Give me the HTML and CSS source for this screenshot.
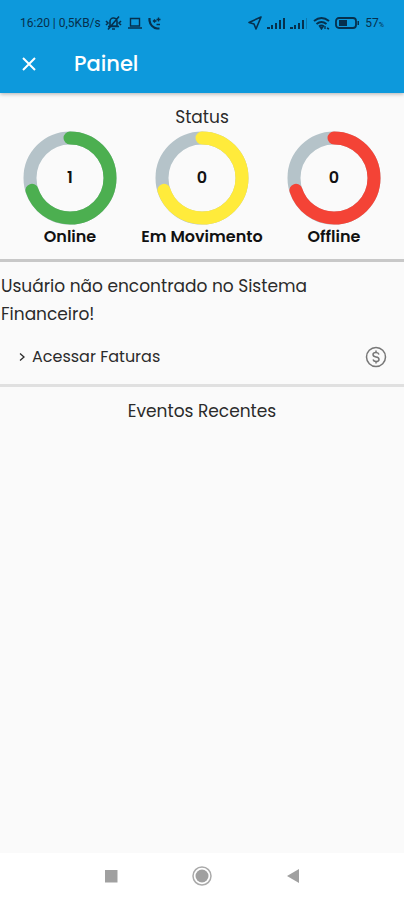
FILE: index.html
```html
<!DOCTYPE html>

<html lang="pt-BR">
    <head>
        <title>Painel</title>
        <meta charset="utf-8">
        <meta name="viewport" content="width=device-width, initial-scale=1">
        <link rel="stylesheet" href="styles.css">
    </head>

    <body>
        <header class="top">
            <div class="statusbar">
                <div class="sb-group">
                    <span>16:20 | 0,5KB/s</span>
                    <!-- muted bell -->
                    <svg width="17" height="16" viewBox="0 0 17 16" fill="none" stroke="currentColor" stroke-width="1.6">
                        <path d="M5 11V7a3.500 3.500 0 0 1 7-1v5zM3 11.500h11M7 14h3M3 14.500L14 1.500M1 6l2 2-2 2M16 6l-2 2 2 2"/>
                    </svg>
                    <!-- laptop -->
                    <svg width="14" height="14" viewBox="0 0 14 14" fill="none" stroke="currentColor" stroke-width="1.4">
                        <path d="M2.500 2.500h9v7.500h-9zM0 12h14"/>
                    </svg>
                    <!-- call -->
                    <svg width="13" height="13" viewBox="0 0 13 13" fill="none" stroke="currentColor">
                        <path stroke-width="2.200" d="M1.500 1v2.500C2 7.500 5 11 9 11.500h2.500"/>
                        <path stroke-width="1.400" d="M5.500 4h3M7 2.500L5.500 4 7 5.500M8.500 2.500h4M10.500 .5v4M8.500 7.500h3.500"/>
                    </svg>
                </div>
                <div class="sb-group sb-right">
                    <svg width="14" height="14" viewBox="0 0 14 14" fill="none" stroke="currentColor" stroke-width="1.600" stroke-linejoin="round">
                        <path d="M13 1L1 6.500l5 1.500 2 5z"/>
                    </svg>
                    <svg width="18" height="14" viewBox="0 0 18 14" fill="currentColor">
                        <path d="M0 11h3v2H0zM4 9h2v4H4zM8 7h2v6H8zM12 4h2v9h-2zM16 2h2v11h-2z"/>
                    </svg>
                    <svg width="18" height="14" viewBox="0 0 18 14" fill="currentColor">
                        <path d="M0 11h3v2H0zM4 9h2v4H4zM8 7h2v6H8zM12 4h2v9h-2z"/>
                        <path opacity=".3" d="M16 2h1v11h-1z"/>
                    </svg>
                    <svg width="17" height="14" viewBox="0 0 17 14" fill="none" stroke="currentColor" stroke-width="2">
                        <path d="M1 5q7.500-6 15 0M3.500 8q5-4 10 0M6 10.500q2.500-2 5 0"/>
                        <path stroke-width="1.400" d="M8.500 13l-1-1.500h2zM12 10v3M14 12l2 1"/>
                    </svg>
                    <svg width="25" height="14" viewBox="0 0 25 14" fill="none" stroke="currentColor">
                        <rect x="1" y="2" width="20" height="10" rx="3" stroke-width="1.800"/>
                        <path fill="currentColor" stroke="none" d="M4 4h8v6H4zM22.500 5H24v4h-1.500z"/>
                    </svg>
                    <span>57<small>%</small></span>
                </div>
            </div>
            <div class="appbar">
                <button class="close" type="button" aria-label="Fechar">
                    <svg width="14" height="14" viewBox="0 0 14 14" fill="none" stroke="currentColor" stroke-width="2">
                        <path d="M1 1l12 12M13 1L1 13"/>
                    </svg>
                </button>
                <h1>Painel</h1>
            </div>
        </header>

        <main>
            <section class="status">
                <h2>Status</h2>
                <div class="rings">
                    <div class="ring online">
                        <div class="dial">
                            <svg viewBox="0 0 94 94">
                                <circle class="track" cx="47" cy="47" r="40"/>
                                <circle class="value" cx="47" cy="47" r="40" pathLength="100"/>
                            </svg>
                            <b>1</b>
                        </div>
                        <span>Online</span>
                    </div>
                    <div class="ring moving">
                        <div class="dial">
                            <svg viewBox="0 0 94 94">
                                <circle class="track" cx="47" cy="47" r="40"/>
                                <circle class="value" cx="47" cy="47" r="40" pathLength="100"/>
                            </svg>
                            <b>0</b>
                        </div>
                        <span>Em Movimento</span>
                    </div>
                    <div class="ring offline">
                        <div class="dial">
                            <svg viewBox="0 0 94 94">
                                <circle class="track" cx="47" cy="47" r="40"/>
                                <circle class="value" cx="47" cy="47" r="40" pathLength="100"/>
                            </svg>
                            <b>0</b>
                        </div>
                        <span>Offline</span>
                    </div>
                </div>
            </section>

            <section class="finance">
                <p>Usuário não encontrado no Sistema Financeiro!</p>
                <a class="bills" href="#">
                    <svg width="8" height="10" viewBox="0 0 8 10" fill="none" stroke="currentColor" stroke-width="1.300">
                        <path d="M2 1.500l4 3.500-4 3.500"/>
                    </svg>
                    <span>Acessar Faturas</span>
                    <svg class="coin" width="22" height="22" viewBox="0 0 22 22" fill="none" stroke="currentColor" stroke-width="1.500">
                        <circle cx="11" cy="11" r="9.500"/>
                        <path d="M14 8.500C13.500 7 12.500 6.500 11 6.500c-4 0-4 4 0 4.500s4 4.500 0 4.500c-1.500 0-2.500-.5-3-2M11 4.500v2M11 15.500v2"/>
                    </svg>
                </a>
            </section>

            <section class="events">
                <h2>Eventos Recentes</h2>
            </section>
        </main>

        <nav class="navbar">
            <button type="button" aria-label="Recentes">
                <svg width="20" height="20" viewBox="0 0 20 20"><path fill="#a0a0a0" d="M4 4h12.500v12.500H4z"/></svg>
            </button>
            <button type="button" aria-label="Início">
                <svg width="20" height="20" viewBox="0 0 20 20">
                    <circle cx="10" cy="10" r="9" fill="none" stroke="#aaa" stroke-width="1.500"/>
                    <circle cx="10" cy="10" r="6.500" fill="#a0a0a0"/>
                </svg>
            </button>
            <button type="button" aria-label="Voltar">
                <svg width="20" height="20" viewBox="0 0 20 20"><path fill="#a0a0a0" d="M16 3v14L4 10z"/></svg>
            </button>
        </nav>
    </body>
</html>
```
FILE: styles.css
```css
* {
    box-sizing: border-box;
}
body {
    margin: 0;
    min-height: 100vh;
    display: flex;
    flex-direction: column;
    background-color: #fafafa;
    color: #2b2b2b;
    font-family: Poppins, Inter, sans-serif;
    font-size: 17px;
    line-height: 28px;
}
h1, h2, p {
    margin: 0;
    font-weight: 400;
}
h2 {
    font-size: 17px;
    text-align: center;
}
svg {
    display: block;
    flex: none;
}
button {
    padding: 0;
    border: none;
    background: transparent;
    color: inherit;
}

/* header */
.top {
    background-color: #0d99dc;
    box-shadow: 0 1px 4px rgba(0, 0, 0, 0.3);
}
.statusbar {
    display: flex;
    justify-content: space-between;
    padding: 12px 20px 0;
    color: #06304d;
    font-family: Roboto, sans-serif;
    font-size: 12px;
    line-height: 22px;
}
.sb-group {
    display: flex;
    align-items: center;
    gap: 6px;
}
.sb-group:first-child span {
    margin-right: -2px;
}
.sb-right {
    gap: 5px;
}
.statusbar small {
    font-size: 7px;
    line-height: 1;
}
.appbar {
    display: flex;
    align-items: center;
    gap: 38px;
    height: 59px;
    padding: 0 22px;
    color: #fff;
}
.appbar h1 {
    font-size: 21px;
    font-weight: 500;
}

/* status rings */
.status {
    padding: 10px 4px;
    border-bottom: 3px solid #c8c8c8;
}
.rings {
    display: grid;
    grid-template-columns: repeat(3, 1fr);
}
.ring {
    display: flex;
    flex-direction: column;
    align-items: center;
    color: #111;
    font-size: 16px;
    font-weight: 600;
    line-height: 24px;
    white-space: nowrap;
}
.dial {
    display: grid;
    place-items: center;
    width: 94px;
}
.dial svg, .dial b {
    grid-area: 1 / 1;
}
.dial b {
    font-weight: 600;
}
.dial svg {
    width: 100%;
    transform: rotate(-90deg);
}
.dial circle {
    fill: none;
    stroke-width: 13;
}
.track {
    stroke: #b5c3c9;
}
.value {
    stroke-linecap: round;
    stroke-dasharray: 70 100;
}
.online .value {
    stroke: #4caf50;
}
.moving .value {
    stroke: #ffeb3b;
}
.offline .value {
    stroke: #f44336;
}

/* finance */
.finance {
    padding: 10px 0 13px;
    border-bottom: 3px solid #e0e0e0;
}
.finance p {
    padding: 0 1px;
}
.bills {
    display: flex;
    align-items: center;
    gap: 6px;
    padding: 15px 17px 0 18px;
    color: inherit;
    font-size: 16px;
    text-decoration: none;
}
.coin {
    margin-left: auto;
    color: #777;
}
.events {
    padding-top: 10px;
}

/* android buttons */
.navbar {
    display: flex;
    justify-content: center;
    gap: 71px;
    margin-top: auto;
    padding: 13px 0 14px;
    background-color: #fff;
}
```
